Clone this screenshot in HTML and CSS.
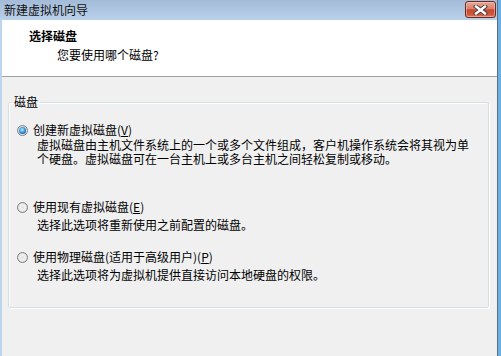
FILE: index.html
```html
<!DOCTYPE html>
<html lang="zh-CN">
<head>
<meta charset="utf-8">
<title>新建虚拟机向导</title>
<link rel="stylesheet" href="styles.css">
</head>
<body>
<div class="window">
  <div class="titlebar">
    <span class="title">新建虚拟机向导</span>
    <button class="close" aria-label="关闭">
      <svg width="15" height="10" viewBox="0 0 15 10">
        <path d="M3 1.5 L12 8.5 M12 1.5 L3 8.5" stroke="#3f3f3f" stroke-width="4.2" stroke-linecap="square" fill="none"/>
        <path d="M3 1.5 L12 8.5 M12 1.5 L3 8.5" stroke="#ffffff" stroke-width="2.4" stroke-linecap="square" fill="none"/>
      </svg>
    </button>
  </div>
  <div class="client">
    <div class="header">
      <div class="h-title">选择磁盘</div>
      <div class="h-sub">您要使用哪个磁盘?</div>
    </div>
    <div class="body">
      <fieldset class="group">
        <legend>磁盘</legend>
        <div class="options">
          <div class="option">
            <div class="row"><span class="radio checked"></span><span>创建新虚拟磁盘(<u>V</u>)</span></div>
            <div class="desc desc-first">虚拟磁盘由主机文件系统上的一个或多个文件组成，客户机操作系统会将其视为单<br>个硬盘。虚拟磁盘可在一台主机上或多台主机之间轻松复制或移动。</div>
          </div>
          <div class="option option-2">
            <div class="row"><span class="radio"></span><span>使用现有虚拟磁盘(<u>E</u>)</span></div>
            <div class="desc">选择此选项将重新使用之前配置的磁盘。</div>
          </div>
          <div class="option option-3">
            <div class="row"><span class="radio"></span><span>使用物理磁盘(适用于高级用户)(<u>P</u>)</span></div>
            <div class="desc">选择此选项将为虚拟机提供直接访问本地硬盘的权限。</div>
          </div>
        </div>
      </fieldset>
    </div>
  </div>
</div>
</body>
</html>
```

FILE: styles.css
```css
* { box-sizing: border-box; }

html, body {
  margin: 0;
  padding: 0;
}

body {
  width: 501px;
  height: 356px;
  overflow: hidden;
  background: #6cb0e3;
  font-family: "Noto Sans CJK SC", "Noto Sans", sans-serif;
  font-size: 12px;
  line-height: 14px;
  color: #000;
}

.window {
  width: 498px;
  height: 356px;
  display: flex;
  flex-direction: column;
  border-right: 1px solid #5f6f82;
}

.titlebar {
  height: 20px;
  flex: none;
  display: flex;
  align-items: flex-start;
  justify-content: space-between;
  background: linear-gradient(#a3bbd8, #bad1ea);
}

.title {
  padding-left: 4px;
  line-height: 20px;
  color: #111;
}

.close {
  margin: 1px 1px 0 0;
  width: 31px;
  height: 17px;
  padding: 0;
  border: 1px solid #6a2a20;
  border-radius: 3px;
  background: linear-gradient(#e9a795 0%, #d9806c 45%, #c5482e 52%, #cf5a3f 85%, #dd7a5c 100%);
  box-shadow: inset 0 0 0 1px rgba(255, 220, 210, 0.45);
  display: flex;
  align-items: center;
  justify-content: center;
}

.close svg { display: block; }

.client {
  flex: 1;
  display: flex;
  flex-direction: column;
  background: #f0f0f0;
  border-left: 2px solid #bcd4ec;
}

.header {
  height: 57px;
  flex: none;
  background: #fff;
  border-bottom: 1px solid #a0a0a0;
  padding: 9px 0 0 27px;
}

.h-title {
  font-weight: 700;
}

.h-sub {
  margin: 5px 0 0 28px;
}

.body {
  padding: 18px 8px 0 6px;
}

.group {
  margin: 0;
  padding: 0;
  min-inline-size: 0;
  border: 1px solid #d5dfe5;
  border-radius: 2px;
  box-shadow: 1px 1px 0 #fff, inset 1px 1px 0 #fff;
}

.group legend {
  margin-left: 3px;
  padding: 0 2px;
  line-height: 14px;
}

.options {
  padding: 14px 8px 25px 8px;
}

.row {
  display: flex;
  align-items: center;
  gap: 5px;
  height: 14px;
  white-space: nowrap;
}

.radio {
  position: relative;
  flex: none;
  width: 11px;
  height: 11px;
  border-radius: 50%;
  border: 1px solid #7f8181;
  background: radial-gradient(circle at 50% 50%, #e2e2e2 0, #f2f2f2 45%, #d6d6d6 75%, #c6c6c6 100%);
}

.radio.checked::after {
  content: "";
  position: absolute;
  left: 1px;
  top: 1px;
  width: 7px;
  height: 7px;
  border-radius: 50%;
  background: radial-gradient(circle at 45% 40%, #c8f4ff 0, #55b2ee 35%, #1d66b8 70%, #0f3a70 100%);
}

.desc {
  margin: 4px 0 0 20px;
  white-space: nowrap;
}

.desc-first {
  margin-top: 1px;
}

.option-2 { margin-top: 34px; }
.option-3 { margin-top: 18px; }

u { text-decoration-thickness: 1px; text-underline-offset: 1px; }
```
